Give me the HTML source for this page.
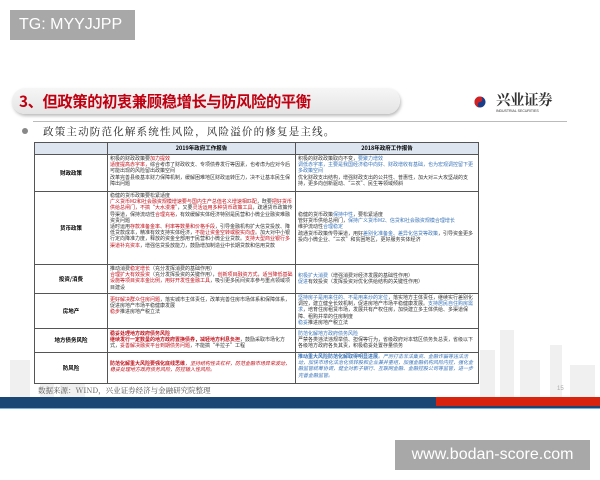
<!DOCTYPE html>
<html><head><meta charset="utf-8"><style>
*{margin:0;padding:0;box-sizing:border-box}
body{width:600px;height:480px;background:#fff;position:relative;overflow:hidden;font-family:"Liberation Sans","Noto Sans CJK SC",sans-serif}
.abs{position:absolute}
.tg{left:10px;top:10px;width:125px;height:30px;background:#a8a8a8;color:#fff;font-size:16px;line-height:30px;padding-left:9px}
.www{left:395px;top:440px;width:195px;height:30px;background:#a8a8a8;color:#fff;font-size:16px;line-height:30px;text-align:center}
.pill{left:12px;top:88px;width:388px;height:26px;border-radius:13px;background:linear-gradient(#f6f6f6,#e4e4e4);box-shadow:1px 2px 3px #bbb}
.title{left:19px;top:88px;line-height:26px;color:#c00010;font-weight:bold;font-size:15.3px;font-family:"Noto Sans CJK SC",sans-serif;letter-spacing:-0.4px}
table{position:absolute;left:34px;top:142px;width:445px;border-collapse:collapse;table-layout:fixed;font-family:"Noto Sans CJK SC",sans-serif;font-size:5px;line-height:6.2px;background:#fff}
td{border:1px solid #555;vertical-align:middle;padding:0 2px}
td div{overflow:hidden}
th{border:1px solid #555;background:#dde6f0;height:12px;font-size:5.5px;font-weight:bold}
td.h{text-align:center;font-weight:bold;font-size:5.5px}
.r{color:#c0101a}.b{color:#3a74b8}.k{color:#333}
</style></head><body>
<div class="abs tg">TG: MYYJJPP</div>
<svg class="abs" style="left:0;top:320px" width="600" height="80"><g fill="#f0f0f0"><rect x="10" y="40" width="20" height="40"/><rect x="40" y="20" width="14" height="60"/><rect x="60" y="35" width="25" height="45"/><rect x="480" y="30" width="15" height="50"/><rect x="500" y="10" width="14" height="70"/><rect x="520" y="40" width="20" height="40"/><rect x="550" y="25" width="12" height="55"/><rect x="570" y="45" width="25" height="35"/></g></svg>
<div class="abs pill"></div>
<div class="abs title">3、但政策的初衷兼顾稳增长与防风险的平衡</div>
<svg class="abs" style="left:474px;top:95px" width="12" height="14"><circle cx="6" cy="7" r="5.5" fill="#1a3d8a"/><path d="M6 1.5A5.5 5.5 0 0 0 6 12.5A2.8 2.8 0 0 1 6 7A2.8 2.8 0 0 0 6 1.5Z" fill="#d42020"/></svg>
<div class="abs" style="left:496px;top:92px;font-size:14.5px;font-family:'Noto Serif CJK SC',serif;font-weight:bold;color:#333;line-height:16px;letter-spacing:-0.5px">兴业证券</div>
<div class="abs" style="left:496px;top:109px;font-size:3.5px;color:#333">INDUSTRIAL SECURITIES</div>
<div class="abs" style="left:33px;top:121px;width:534px;height:1px;background:#bbb"></div>
<div class="abs" style="left:22px;top:128px;width:6px;height:6px;border-radius:3px;background:#888"></div>
<div class="abs" style="left:43px;top:124px;font-size:10.5px;letter-spacing:1.2px;font-family:'Noto Serif CJK SC',serif;color:#222">政策主动防范化解系统性风险，风险溢价的修复是主线。</div>
<table>
<colgroup><col style="width:73px"><col style="width:188px"><col></colgroup>
<tr><th></th><th>2019年政府工作报告</th><th>2018年政府工作报告</th></tr>
<tr><td class="h">财政政策</td><td><div style="height:36px;padding-top:1px"><span class="k">积极的财政政策要</span><span class="r">加力提效</span><br><span class="r">适度提高赤字率，</span><span class="k">综合考虑了财政收支、专项债券发行等因素，也考虑为应对今后可能出现的风险留出政策空间</span><br><span class="k">改革完善县级基本财力保障机制，缓解困难地区财政运转压力，决不让基本民生保障出问题</span></div></td><td><div style="height:36px;padding-top:1px"><span class="k">积极的财政政策取向不变，</span><span class="b">要聚力增效</span><br><span class="b">调低赤字率，主要是我国经济稳中向好、财政增收有基础，也为宏观调控留下更多政策空间</span><br><span class="k">优化财政支出结构，增强财政支出的公共性、普惠性，加大对三大攻坚战的支持，更多向创新驱动、“三农”、民生等领域倾斜</span></div></td></tr>
<tr><td class="h">货币政策</td><td><div style="height:72px;padding-top:1px"><span class="k">稳健的货币政策要松紧适度</span><br><span class="r">广义货币M2和社会融资规模增速要与国内生产总值名义增速相匹配</span><span class="k">，既要</span><span class="r">把好货币供给总闸门，不搞“大水漫灌”</span><span class="k">，又要</span><span class="r">灵活运用多种货币政策工具</span><span class="k">，疏通货币政策传导渠道，保持流动性</span><span class="r">合理充裕</span><span class="k">，有效缓解实体经济特别是民营和小微企业融资难融资贵问题</span><br><span class="k">适时运用</span><span class="r">存款准备金率、利率等数量和价格手段</span><span class="k">，引导金融机构扩大信贷投放、降低贷款成本，精准有效支持实体经济，</span><span class="r">不能让资金空转或脱实向虚</span><span class="k">。加大对中小银行定向降准力度，释放的资金全部用于民营和小微企业贷款。</span><span class="r">支持大型商业银行多渠道补充资本</span><span class="k">，增强信贷投放能力，鼓励增加制造业中长期贷款和信用贷款</span></div></td><td><div style="height:72px;padding-top:20px"><span class="k">稳健的货币政策</span><span class="b">保持中性</span><span class="k">，要松紧适度</span><br><span class="k">管好货币供给总闸门，</span><span class="b">保持广义货币M2、信贷和社会融资规模合理增长</span><br><span class="k">维护流动性</span><span class="b">合理稳定</span><br><span class="k">疏通货币政策传导渠道，用好</span><span class="b">差别化准备金、差异化信贷等政策</span><span class="k">，引导资金更多投向小微企业、“三农”和贫困地区，更好服务实体经济</span></div></td></tr>
<tr><td class="h">投资/消费</td><td><div style="height:28px;padding-top:1px"><span class="k">推动消费</span><span class="r">稳定增长</span><span class="k">（充分发挥消费的基础作用）</span><br><span class="r">合理扩大有效投资</span><span class="k">（充分发挥投资的关键作用），</span><span class="r">创新项目融资方式，适当降低基础设施等项目资本金比例，用好开发性金融工具</span><span class="k">，吸引更多民间资本参与重点领域项目建设</span></div></td><td><div style="height:28px;padding-top:8px"><span class="b">积极扩大消费</span><span class="k">（增强消费对经济发展的基础性作用）</span><br><span class="b">促进</span><span class="k">有效投资（发挥投资对优化供给结构的关键性作用）</span></div></td></tr>
<tr><td class="h">房地产</td><td><div style="height:34px;padding-top:3px"><span class="r">更好解决群众住房问题</span><span class="k">，落实城市主体责任，改革完善住房市场体系和保障体系，促进房地产市场平稳健康发展</span><br><span class="r">稳步</span><span class="k">推进房地产税立法</span></div></td><td><div style="height:34px;padding-top:1px"><span class="b">坚持房子是用来住的、不是用来炒的定位</span><span class="k">，落实地方主体责任，继续实行差别化调控，建立健全长效机制，促进房地产市场平稳健康发展。</span><span class="b">支持居民自住购房需求</span><span class="k">，培育住房租赁市场，发展共有产权住房，加快建立多主体供给、多渠道保障、租购并举的住房制度</span><br><span class="b">稳妥</span><span class="k">推进房地产税立法</span></div></td></tr>
<tr><td class="h">地方债务风险</td><td><div style="height:23px;padding-top:2px"><span class="r"><b>稳妥处理地方政府债务风险</b></span><br><span class="r"><b>继续发行一定数量的地方政府置换债券，减轻地方利息负担</b></span><span class="k">，鼓励采取市场化方式，</span><span class="r">妥善解决融资平台到期债务问题</span><span class="k">，不能搞“半拉子”工程</span></div></td><td><div style="height:23px;padding-top:2px"><span class="b">防范化解地方政府债务风险</span><br><span class="k">严禁各类违法违规举债、担保等行为，省级政府对本辖区债务负总责，省级以下各级地方政府各负其责，积极稳妥处置存量债务</span></div></td></tr>
<tr><td class="h">防风险</td><td><div style="height:30px;padding-top:8px"><span class="r"><b>防范化解重大风险要强化底线思维</b><i>，坚持结构性去杠杆，防范金融市场异常波动，稳妥处理地方政府债务风险，防控输入性风险。</i></span></div></td><td><div style="height:30px;padding-top:1px"><span class="b"><b>推动重大风险防范化解取得明显进展</b><i>。严厉打击非法集资、金融诈骗等违法活动，加快市场化法治化债转股和企业兼并重组，加强金融机构风险内控，强化金融监管统筹协调，健全对影子银行、互联网金融、金融控股公司等监管，进一步完善金融监管。</i></span></div></td></tr>
</table>
<div class="abs" style="left:38px;top:385px;font-size:7.5px;color:#555;font-family:'Noto Serif CJK SC',serif">数据来源：WIND，兴业证券经济与金融研究院整理</div>
<div class="abs" style="left:557px;top:386px;font-size:6px;color:#aaa">15</div>
<div class="abs" style="left:0;top:397px;width:600px;height:11px;background:#1b4775"></div>
<div class="abs" style="left:436px;top:397px;width:164px;height:9px;background:#d8240e"></div>
<div class="abs" style="left:0;top:408px;width:600px;height:1px;background:#7ab0d8"></div>
<div class="abs www">www.bodan-score.com</div>
</body></html>
